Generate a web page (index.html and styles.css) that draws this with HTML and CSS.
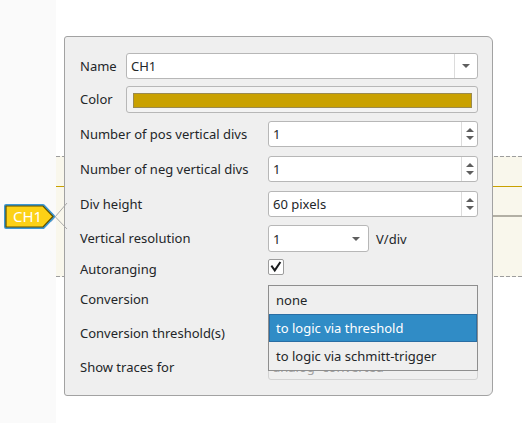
FILE: index.html
```html
<!DOCTYPE html>
<html>
<head>
<meta charset="utf-8">
<link rel="stylesheet" href="styles.css">
</head>
<body>
<div class="canvas">
  <div class="ruler"></div>
  <div class="traces">
    <div class="top-space"></div>
    <div class="band">
      <div class="dash"></div>
      <div class="sp29"></div>
      <div class="yellow-line"></div>
      <div class="sp28"></div>
      <div class="gray-line"></div>
      <div class="sp-rest"></div>
      <div class="dash"></div>
    </div>
  </div>
</div>

<div class="popup">
  <div class="form-top">
    <div class="label">Name</div>
    <div class="combo name-combo">
      <span class="value">CH1</span>
      <span class="drop-btn"><span class="tri-down"></span></span>
    </div>
    <div class="label">Color</div>
    <div class="color-btn"><div class="swatch"></div></div>
  </div>

  <div class="form-main">
    <div class="label">Number of pos vertical divs</div>
    <div class="spin"><span class="value">1</span><span class="spin-btns"><span class="tri-up"></span><span class="tri-down"></span></span></div>

    <div class="label">Number of neg vertical divs</div>
    <div class="spin"><span class="value">1</span><span class="spin-btns"><span class="tri-up"></span><span class="tri-down"></span></span></div>

    <div class="label">Div height</div>
    <div class="spin"><span class="value">60 pixels</span><span class="spin-btns"><span class="tri-up"></span><span class="tri-down"></span></span></div>

    <div class="label">Vertical resolution</div>
    <div class="vres-row">
      <div class="combo vres-combo"><span class="value">1</span><span class="tri-down"></span></div>
      <span class="unit">V/div</span>
    </div>

    <div class="label label-short">Autoranging</div>
    <div class="check-cell">
      <span class="checkbox">
        <svg width="16" height="16" viewBox="0 0 16 16"><path d="M3.4 7.4 L6.6 11.9 L12.4 3.2" fill="none" stroke="#1b1d1f" stroke-width="2.3" stroke-linecap="square" stroke-linejoin="miter"/></svg>
      </span>
    </div>

    <div class="label">Conversion</div>
    <div class="combo"><span class="value"></span><span class="tri-down"></span></div>

    <div class="label">Conversion threshold(s)</div>
    <div class="lineedit"><span class="value"></span></div>

    <div class="label">Show traces for</div>
    <div class="combo disabled"><span class="value">analog+converted</span><span class="tri-down"></span></div>
  </div>

  <div class="drop-list">
    <div class="item">none</div>
    <div class="item selected">to logic via threshold</div>
    <div class="item">to logic via schmitt-trigger</div>
  </div>
</div>

<svg class="marker" width="72" height="40" viewBox="0 0 72 40">
  <line x1="67" y1="7" x2="51" y2="25.7" stroke="#a9a9a9" stroke-width="1"/>
  <line x1="67" y1="33" x2="51" y2="16.3" stroke="#a9a9a9" stroke-width="1"/>
  <polygon points="6,10 43,10 53,20.5 43,31 6,31" fill="#fcd116" stroke="#3b98d6" stroke-width="4" stroke-linejoin="round"/>
  <polygon points="6,10 43,10 53,20.5 43,31 6,31" fill="#fcd116" stroke="#5e5000" stroke-width="1.2" stroke-linejoin="miter"/>
  <text x="13" y="26" class="marker-text">CH1</text>
</svg>
</body>
</html>
```

FILE: styles.css
```css
html, body {
  margin: 0;
  padding: 0;
}
body {
  width: 522px;
  height: 423px;
  position: relative;
  overflow: hidden;
  background: #ffffff;
  font-family: "Noto Sans", "Open Sans", sans-serif;
  font-size: 13px;
  color: #232629;
}

.canvas {
  display: flex;
  height: 423px;
}
.ruler {
  width: 56px;
  background: #fafafa;
}
.traces {
  flex: 1;
  display: flex;
  flex-direction: column;
}
.top-space { height: 156px; }
.band {
  display: flex;
  flex-direction: column;
  background: #f9f7ec;
  height: 121px;
}
.dash {
  height: 1px;
  background: repeating-linear-gradient(90deg, #9d9d9d 0 4px, transparent 4px 6px);
}
.sp29 { height: 29px; }
.sp28 { height: 28px; }
.sp-rest { flex: 1; }
.yellow-line {
  height: 1px;
  background: #c9a100;
}
.gray-line {
  height: 2px;
  margin-left: 8px;
  background: #b2afa4;
}

/* popup */
.popup {
  position: absolute;
  left: 64px;
  top: 36px;
  width: 429px;
  height: 360px;
  box-sizing: border-box;
  background: #efefef;
  border: 1px solid #a2a2a2;
  border-radius: 3px 6px 6px 3px;
  padding: 16px 14px 0 15px;
}

.form-top {
  display: grid;
  grid-template-columns: 46px 1fr;
  grid-template-rows: 26px 27px;
  row-gap: 7px;
}
.form-main {
  margin-top: 8px;
  display: grid;
  grid-template-columns: 188px 1fr;
  grid-template-rows: 35px 35px 34px 34px 27px 34px 34px 26px;
  align-items: start;
}

.label {
  height: 26px;
  line-height: 26px;
  white-space: nowrap;
}
.label-short {
  height: 20px;
  line-height: 20px;
}

.value {
  flex: 1;
  white-space: nowrap;
  overflow: hidden;
}

.combo, .spin, .lineedit {
  height: 26px;
  box-sizing: border-box;
  background: #ffffff;
  border: 1px solid #b7b7b7;
  border-radius: 3px;
  display: flex;
  align-items: center;
  padding-left: 4px;
  line-height: 24px;
}
.combo .tri-down {
  margin-right: 8px;
}
.name-combo {
  padding-right: 0;
}
.drop-btn {
  width: 22px;
  height: 24px;
  border-left: 1px solid #dcdcdc;
  display: flex;
  align-items: center;
  justify-content: center;
}
.drop-btn .tri-down { margin: 0; }

.tri-down {
  width: 0;
  height: 0;
  border-left: 4px solid transparent;
  border-right: 4px solid transparent;
  border-top: 4px solid #5e5e5e;
}
.tri-up {
  width: 0;
  height: 0;
  border-left: 4px solid transparent;
  border-right: 4px solid transparent;
  border-bottom: 4px solid #5e5e5e;
}

.spin-btns {
  width: 15px;
  height: 24px;
  border-left: 1px solid #dcdcdc;
  display: flex;
  flex-direction: column;
  align-items: center;
  justify-content: center;
  gap: 4px;
}
.spin-btns .tri-up, .spin-btns .tri-down {
  border-left-width: 4.5px;
  border-right-width: 4.5px;
}

.color-btn {
  height: 27px;
  box-sizing: border-box;
  background: #f3f3f3;
  border: 1px solid #b7b7b7;
  border-radius: 3px;
  padding: 6px 5px 4px 6px;
}
.swatch {
  height: 15px;
  box-sizing: border-box;
  background: #c9a100;
  border: 1px solid #9a8a50;
}

.vres-row {
  display: flex;
  align-items: center;
  gap: 7px;
}
.vres-combo {
  width: 101px;
  height: 27px;
}
.vres-combo .tri-down { margin-right: 8px; }

.check-cell {
  display: flex;
}
.checkbox {
  width: 16px;
  height: 16px;
  box-sizing: border-box;
  background: #ffffff;
  border: 1px solid #9c9c9c;
  border-radius: 2px;
  display: flex;
  align-items: center;
  justify-content: center;
}
.checkbox svg {
  width: 14px;
  height: 14px;
}

.disabled {
  background: #efefef;
  border-color: #d3d3d3;
  color: #a3a3a3;
}
.disabled .tri-down { border-top-color: #b5b5b5; }

/* dropdown list overlay */
.drop-list {
  position: absolute;
  left: 203px;
  top: 248px;
  width: 210px;
  box-sizing: border-box;
  background: #efefef;
  border: 1px solid #8e8e8e;
  display: flex;
  flex-direction: column;
}
.item {
  height: 28px;
  line-height: 28px;
  padding-left: 7px;
  box-sizing: border-box;
  white-space: nowrap;
}
.item.selected {
  background: #308cc6;
  color: #ffffff;
  border: 1px solid #2a6ea4;
  line-height: 26px;
  padding-left: 6px;
}

/* channel marker */
.marker {
  position: absolute;
  left: 0;
  top: 196px;
}
.marker-text {
  font-family: "Noto Sans", "Open Sans", sans-serif;
  font-size: 15px;
  fill: #ffffff;
}
```
